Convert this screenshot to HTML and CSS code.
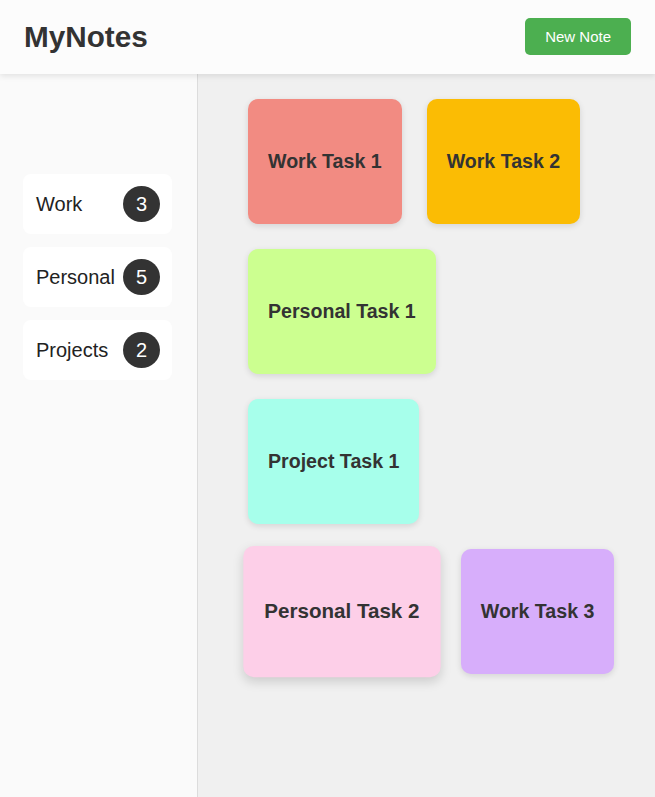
FILE: index.html
```html
<!DOCTYPE html>
<html lang="en">
<head>
<meta charset="utf-8">
<title>MyNotes</title>
<link rel="stylesheet" href="styles.css">
</head>
<body>
<header class="header">
  <h1 class="logo">MyNotes</h1>
  <button class="new-btn">New Note</button>
</header>
<div class="layout">
  <aside class="sidebar">
    <div class="cat"><span class="cat-name">Work</span><span class="badge">3</span></div>
    <div class="cat"><span class="cat-name">Personal</span><span class="badge">5</span></div>
    <div class="cat"><span class="cat-name">Projects</span><span class="badge">2</span></div>
  </aside>
  <main class="notes">
    <div class="note red">Work Task 1</div>
    <div class="note yellow">Work Task 2</div>
    <div class="note green">Personal Task 1</div>
    <div class="note teal">Project Task 1</div>
    <div class="note pink hover">Personal Task 2</div>
    <div class="note purple">Work Task 3</div>
  </main>
</div>
</body>
</html>
```
FILE: styles.css
```css
* { box-sizing: border-box; }
html, body { margin: 0; height: 100%; }
body {
  font-family: "Liberation Sans", Arial, sans-serif;
  color: #333;
  background: #f0f0f0;
  display: flex;
  flex-direction: column;
}
.header {
  height: 74px;
  padding: 0 24px;
  background: #fcfcfc;
  display: flex;
  align-items: center;
  justify-content: space-between;
  box-shadow: 0 2px 6px rgba(0,0,0,0.1);
  position: relative;
  z-index: 1;
  flex: none;
}
.logo {
  margin: 0;
  font-size: 29.7px;
  font-weight: bold;
  color: #333;
}
.new-btn {
  font-family: inherit;
  font-size: 15px;
  color: #fff;
  background: #4caf50;
  border: none;
  border-radius: 5px;
  padding: 10px 20px;
  line-height: 17px;
  margin-bottom: 1px;
}
.layout {
  flex: 1;
  display: flex;
  min-height: 0;
}
.sidebar {
  width: 198px;
  flex: none;
  background: #fafafa;
  border-right: 1px solid #dcdcdc;
  padding: 100px 25px 0 23px;
  display: flex;
  flex-direction: column;
  gap: 13px;
}
.cat {
  height: 60px;
  background: #fff;
  border-radius: 8px;
  padding: 0 12px 0 13px;
  display: flex;
  align-items: center;
  justify-content: space-between;
  font-size: 20px;
  color: #222;
}
.badge {
  width: 37px;
  height: 36px;
  border-radius: 50%;
  background: #333;
  color: #fff;
  display: flex;
  align-items: center;
  justify-content: center;
  font-size: 20px;
}
.notes {
  flex: 1;
  padding: 25px 35px 25px 50px;
  display: flex;
  flex-wrap: wrap;
  align-content: flex-start;
  gap: 25px;
}
.note {
  height: 125px;
  padding: 0 20px;
  border-radius: 10px;
  display: flex;
  align-items: center;
  justify-content: center;
  font-size: 19.6px;
  font-weight: bold;
  color: #333;
  box-shadow: 0 2px 6px rgba(0,0,0,0.12);
}
.hover { transform: scale(1.05); box-shadow: 0 4px 10px rgba(0,0,0,0.15); }
.red { background: #f28b82; }
.yellow { background: #fbbc04; }
.green { background: #ccff90; }
.teal { background: #a7ffeb; }
.pink { background: #fdcfe8; }
.purple { background: #d7aefb; }
```
